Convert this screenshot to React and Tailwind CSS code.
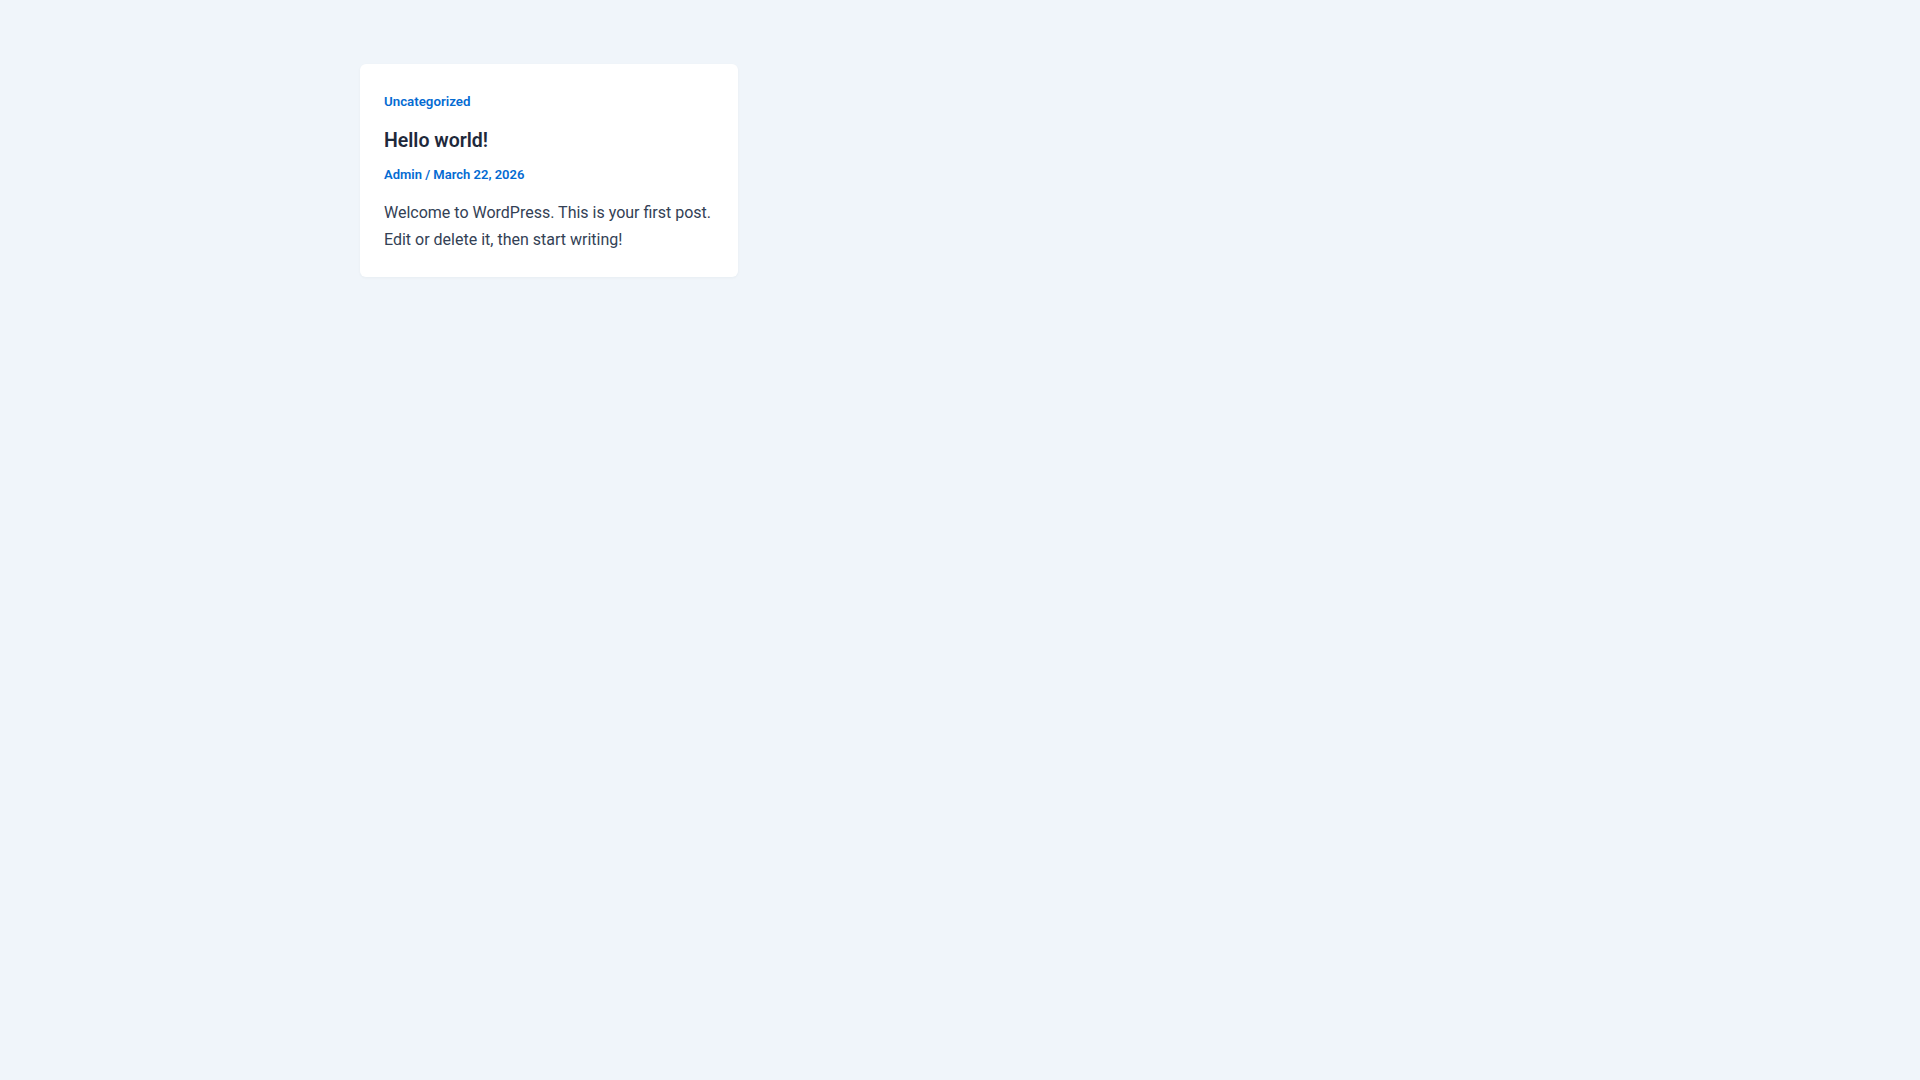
export default function App() {
  return (
    <div className="min-h-screen w-full bg-[#f0f5fa] font-['Roboto',sans-serif]">
      <div className="flex pl-[360px] pt-[64px]">
        <article className="w-[378px] rounded-md bg-white p-6 shadow-[0_1px_3px_rgba(30,41,59,0.04)]">
          <div className="text-[13.3px] font-semibold leading-[27px] text-[#046bd2]">
            <a href="#">Uncategorized</a>
          </div>
          <h2 className="mt-[12px] text-[19.5px] font-semibold leading-[27px] text-[#1e293b]">
            <a href="#">Hello world!</a>
          </h2>
          <div className="mt-[11px] text-[13px] font-semibold leading-[20px] text-[#046bd2]">
            <a href="#">Admin</a> / <span>March 22, 2026</span>
          </div>
          <p className="mt-[14px] text-[16px] leading-[27px] text-[#334155]">
            Welcome to WordPress. This is your first post. Edit or delete it, then start writing!
          </p>
        </article>
      </div>
    </div>
  );
}
